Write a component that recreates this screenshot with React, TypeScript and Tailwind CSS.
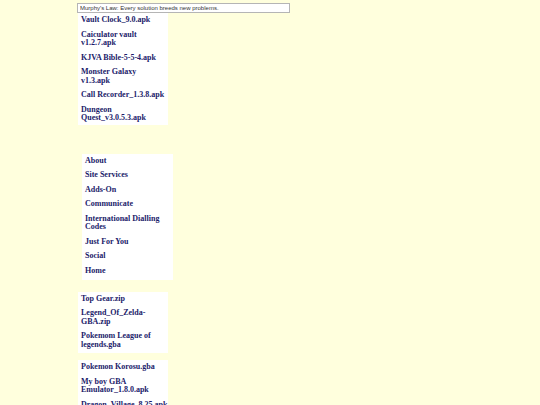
import React from 'react';

const apps1 = [
  'Vault Clock_9.0.apk',
  'Caiculator vault v1.2.7.apk',
  'KJVA Bible-5-5-4.apk',
  'Monster Galaxy v1.3.apk',
  'Call Recorder_1.3.8.apk',
  'Dungeon Quest_v3.0.5.3.apk',
];

const menu = [
  'About',
  'Site Services',
  'Adds-On',
  'Communicate',
  'International Dialling Codes',
  'Just For You',
  'Social',
  'Home',
];

const apps2 = ['Top Gear.zip', 'Legend_Of_Zelda-GBA.zip', 'Pokemom League of legends.gba'];

const apps3 = ['Pokemon Korosu.gba', 'My boy GBA Emulator_1.8.0.apk', 'Dragon_Village_8.25.apk'];

const linkCls =
  "block font-bold text-[8px] leading-[8.5px] text-[#1b1b6a] [font-family:'Liberation_Serif','Times_New_Roman',serif]";

function FileBox({ items, className = '' }: { items: string[]; className?: string }) {
  return (
    <div className={`w-[90px] bg-white pl-[3px] pr-[1px] pt-[3px] flex flex-col gap-[6px] ${className}`}>
      {items.map((t) => (
        <a key={t} href="#" className={linkCls}>
          {t}
        </a>
      ))}
    </div>
  );
}

export default function App() {
  return (
    <div className="h-[405px] w-[540px] bg-[#ffffdd] overflow-hidden">
      <div className="pl-[77px] pt-[3px]">
        <input
          readOnly
          value="Murphy's Law: Every solution breeds new problems."
          className="block w-[213px] h-[10px] bg-white border border-[#b5b5b5] px-[2px] text-[6px] leading-[8px] text-[#333] [font-family:'Liberation_Sans',Arial,sans-serif] outline-none"
        />
        <FileBox items={apps1} className="ml-[1px] pb-[2px]" />

        <div className="ml-[5px] mt-[29px] w-[91px] bg-white pl-[3px] pr-[1px] pt-[3px] pb-[4.5px] flex flex-col gap-[6px]">
          {menu.map((t) => (
            <a key={t} href="#" className={linkCls}>
              {t}
            </a>
          ))}
        </div>

        <FileBox items={apps2} className="ml-[1px] mt-[12px] pb-[4px]" />
        <FileBox items={apps3} className="ml-[1px] mt-[7px] pb-[3px]" />
      </div>
    </div>
  );
}
